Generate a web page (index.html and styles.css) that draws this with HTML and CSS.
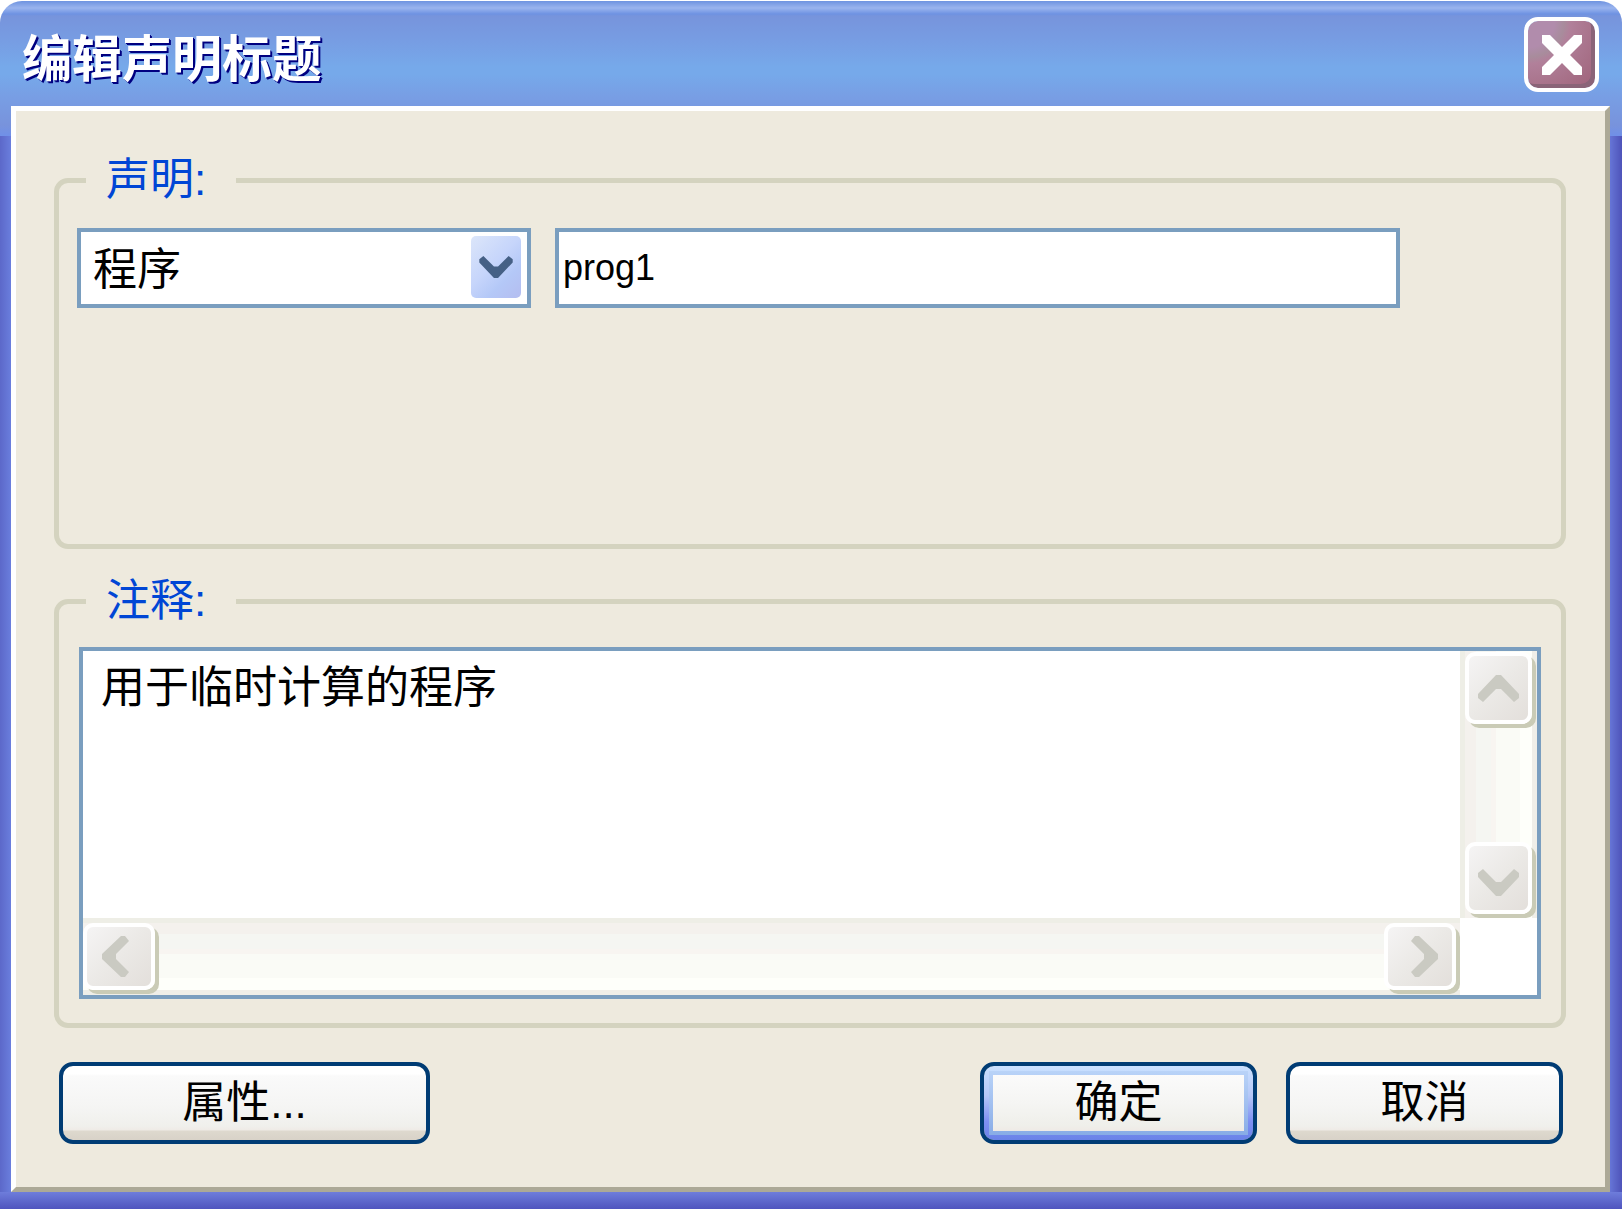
FILE: index.html
```html
<!DOCTYPE html>
<html lang="zh-CN">
<head>
    <meta charset="UTF-8">
    <meta name="viewport" content="width=device-width, initial-scale=1.0">
    <title>编辑声明标题</title>
    <link rel="stylesheet" href="styles.css">
</head>
<body>
<div class="window">
    <header class="titlebar">
        <h1>编辑声明标题</h1>
        <button type="button" class="close" aria-label="关闭">
            <svg width="40" height="40" viewBox="0 0 40 40"><path fill="#fff" d="M0 0h8l12 12L32 0h8v8L28 20l12 12v8h-8L20 28 8 40H0v-8l12-12L0 8z"/></svg>
        </button>
    </header>

    <form class="client">
        <fieldset class="group group-declaration">
            <legend>声明:</legend>
            <div class="fields">
                <div class="combo">
                    <select aria-label="类型">
                        <option>程序</option>
                    </select>
                    <span class="combo-arrow">
                        <svg class="down" width="34" height="22" viewBox="0 0 41 27"><path d="M18 0h5l18 19v4l-5 4-13-13h-5L5 27l-5-4v-4z"/></svg>
                    </span>
                </div>
                <input type="text" class="name" value="prog1" aria-label="名称">
            </div>
        </fieldset>

        <fieldset class="group">
            <legend>注释:</legend>
            <div class="memo">
                <textarea rows="5" aria-label="注释">用于临时计算的程序</textarea>
                <div class="scroll scroll-v">
                    <button type="button" aria-label="向上">
                        <svg width="41" height="27" viewBox="0 0 41 27"><path d="M18 0h5l18 19v4l-5 4-13-13h-5L5 27l-5-4v-4z"/></svg>
                    </button>
                    <button type="button" class="btn-down" aria-label="向下">
                        <svg class="down" width="41" height="27" viewBox="0 0 41 27"><path d="M18 0h5l18 19v4l-5 4-13-13h-5L5 27l-5-4v-4z"/></svg>
                    </button>
                </div>
                <div class="scroll scroll-h">
                    <button type="button" class="btn-left" aria-label="向左">
                        <svg width="27" height="41" viewBox="0 0 27 41"><path d="M0 18v5l19 18h4l4-5-13-13v-5L27 5l-4-5h-4z"/></svg>
                    </button>
                    <button type="button" class="btn-right" aria-label="向右">
                        <svg width="27" height="41" viewBox="0 0 27 41"><path d="M27 18v5L8 41H4l-4-5 13-13v-5L0 5l4-5h4z"/></svg>
                    </button>
                </div>
            </div>
        </fieldset>

        <div class="actions">
            <button type="button" class="button button-wide">属性...</button>
            <button type="button" class="button button-default">确定</button>
            <button type="button" class="button">取消</button>
        </div>
    </form>
</div>
</body>
</html>
```

FILE: styles.css
```css
:root {
    --face: #eeeade;
    --group-line: #d4d3bf;
    --field-line: #7a9ebf;
    --button-line: #003c74;
    --legend: #0046d5;
}

* {
    box-sizing: border-box;
}

body {
    margin: 0;
    padding-top: 1px;
    min-height: 100vh;
    display: flex;
    background: #fff;
    color: #000;
    font-family: "Liberation Sans", "Noto Sans CJK SC", sans-serif;
    font-size: 44px;
    line-height: 52px;
}

button, input, select, textarea {
    font: inherit;
    color: inherit;
    margin: 0;
}

svg {
    display: block;
    flex: none;
}

.window {
    flex: 1;
    display: flex;
    flex-direction: column;
    padding: 0 12px 17px 11px;
    border-radius: 22px 22px 0 0;
    background:
        linear-gradient(#6e93e0 0, #9ab4ee 7px, #6e92e2 13px, #7794dc 15px, #779de3 40px, #76a9ea 66px, #76a9ea 74px, #789ee4 96px, #7893dc 124px, #7090e8 135px) top / 100% 135px no-repeat,
        linear-gradient(#6e7ddb, #4f54be) bottom / 100% 17px no-repeat,
        linear-gradient(90deg, #5c68c9, #6a7edd) left / 11px 100% no-repeat,
        linear-gradient(90deg, #6675d6, #4e53b9) right / 12px 100% no-repeat;
}

/* Title bar */
.titlebar {
    display: flex;
    justify-content: space-between;
    align-items: flex-start;
    height: 105px;
    padding: 16px 11px 0 11px;
}

h1 {
    margin: 0;
    padding-top: 11px;
    color: #fff;
    font-size: 50px;
    font-weight: bold;
    line-height: 64px;
    text-shadow: 1px 1px 0 #000080, 2px 2px 0 #000080;
}

.close {
    display: flex;
    align-items: center;
    justify-content: center;
    width: 75px;
    height: 75px;
    padding: 0;
    border: 4px solid #fff;
    border-radius: 14px;
    background: radial-gradient(circle at 0 0, #b18cac 0 28%, #a88c9c 38%, #b1809a 45%, #a8728a 70%, #a0647c 95%);
    background-clip: padding-box;
    box-shadow: inset -4px -4px 0 #8a6478;
}

/* Dialog face */
.client {
    flex: 1;
    display: flex;
    flex-direction: column;
    padding: 43px 39px 43px 38px;
    border: 5px solid;
    border-color: #fff #aca997 #aca997 #fff;
    background: var(--face);
}

.group {
    min-width: 0;
    margin: 0;
    padding: 20px 20px 24px;
    border: 5px solid var(--group-line);
    border-radius: 14px;
}

.group-declaration {
    flex: 1;
    margin-bottom: 26px;
    padding: 22px 18px;
}

legend {
    margin-left: 7px;
    padding: 0 30px 0 20px;
    color: var(--legend);
}

.group-declaration legend {
    margin-left: 9px;
}

.fields {
    display: flex;
    gap: 24px;
}

.combo {
    position: relative;
    flex: 0 0 454px;
}

.combo select,
.name {
    display: block;
    width: 100%;
    height: 80px;
    border: 4px solid var(--field-line);
    border-radius: 0;
    background: #fff;
    outline: none;
}

.combo select {
    appearance: none;
    padding: 4px 64px 0 12px;
}

/* drop-down arrow drawn over the select */
.combo-arrow {
    position: absolute;
    top: 8px;
    right: 10px;
    bottom: 10px;
    width: 50px;
    display: flex;
    align-items: center;
    justify-content: center;
    border-radius: 5px;
    background: linear-gradient(135deg, #dce6fa, #c6d5fb 45%, #b4c8f7 70%, #b4bdf0);
    fill: #456085;
    pointer-events: none;
}

.name {
    flex: 0 1 845px;
    min-width: 0;
    padding: 0 4px;
    font-size: 36px;
}

.down {
    transform: rotate(180deg);
}

/* Comment box with its scroll bars */
.memo {
    display: grid;
    grid-template-columns: 1fr 77px;
    grid-template-rows: auto 77px;
    border: 4px solid var(--field-line);
    background: #fff;
}

textarea {
    display: block;
    width: 100%;
    padding: 12px 18px 5px;
    border: 0;
    background: none;
    line-height: 50px;
    outline: none;
    resize: none;
    overflow: hidden;
}

.scroll {
    display: flex;
    justify-content: space-between;
    fill: #cacac2;
}

.scroll-v {
    flex-direction: column;
    padding: 1px 5px 4px;
    background: linear-gradient(90deg, #eeeee6 5px, #f4f1ed 5px 16px, #f5f6f2 16px 31px, #f8f5f1 31px 36px, #fafbf6 36px 60px, #fefffa 60px 72px, #efeee8 72px);
}

.scroll-h {
    padding: 5px 4px 5px 0;
    background: linear-gradient(#eeeee6 5px, #f4f1ed 5px 16px, #f5f6f2 16px 31px, #f8f5f1 31px 36px, #fafbf6 36px 60px, #fefffa 60px 72px, #efeee8 72px);
}

.scroll button {
    display: flex;
    align-items: center;
    justify-content: center;
    width: 67px;
    height: 72px;
    padding: 0;
    border: 4px solid #fff;
    border-radius: 10px;
    background: linear-gradient(135deg, #f5f4f4, #ebe9e6 50%, #e3dfdb);
    box-shadow: 4px 4px 0 #cacbb6;
}

.scroll-h button {
    width: 72px;
    height: 67px;
}

.scroll .btn-down {
    padding-top: 8px;
}

.scroll .btn-left {
    padding-right: 8px;
}

.scroll .btn-right {
    padding-left: 8px;
}

/* Bottom buttons */
.actions {
    display: flex;
    gap: 29px;
    margin-top: 34px;
    padding: 0 3px 0 5px;
}

.button {
    width: 277px;
    height: 82px;
    padding: 0;
    border: 4px solid var(--button-line);
    border-radius: 14px;
    background: linear-gradient(#fff 0 8px, #fafafa 10px, #f5f5f4 40px, #f0f0ec 60px, #efebe6 64px, #ded9ce 65px, #d8d2c8 74px) padding-box;
}

.button-wide {
    width: 371px;
    margin-right: auto;
}

.button-default {
    background:
        linear-gradient(#fbfbfb, #f5f5f3 50%, #efefea 90%, #efeae6) center / calc(100% - 18px) calc(100% - 18px) no-repeat padding-box,
        linear-gradient(#b9d3f8, #a2c0f0 50%, #88ace6) center / calc(100% - 10px) calc(100% - 10px) no-repeat padding-box,
        linear-gradient(#cae1ff, #b5c8f8 40%, #7d90f2 75%, #6a82e8) padding-box;
}
```
